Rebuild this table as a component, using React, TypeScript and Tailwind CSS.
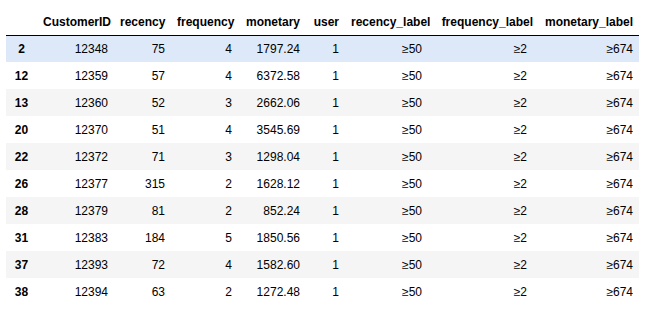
import React from 'react';

const columns = [
  'CustomerID',
  'recency',
  'frequency',
  'monetary',
  'user',
  'recency_label',
  'frequency_label',
  'monetary_label',
];

const rows: [string, string, string, string, string, string][] = [
  ['2', '12348', '75', '4', '1797.24', '1'],
  ['12', '12359', '57', '4', '6372.58', '1'],
  ['13', '12360', '52', '3', '2662.06', '1'],
  ['20', '12370', '51', '4', '3545.69', '1'],
  ['22', '12372', '71', '3', '1298.04', '1'],
  ['26', '12377', '315', '2', '1628.12', '1'],
  ['28', '12379', '81', '2', '852.24', '1'],
  ['31', '12383', '184', '5', '1850.56', '1'],
  ['37', '12393', '72', '4', '1582.60', '1'],
  ['38', '12394', '63', '2', '1272.48', '1'],
];

const App: React.FC = () => {
  return (
    <div className="w-[659px] h-[314px] bg-white overflow-hidden pl-[6px] pt-[8px] font-['Liberation_Sans',Arial,sans-serif] text-[12px] text-black">
      <table className="table-fixed border-collapse w-[633px]">
        <colgroup>
          <col className="w-[31px]" />
          <col className="w-[77px]" />
          <col className="w-[57px]" />
          <col className="w-[67px]" />
          <col className="w-[68px]" />
          <col className="w-[39px]" />
          <col className="w-[83px]" />
          <col className="w-[111px]" />
          <col className="w-[100px]" />
        </colgroup>
        <thead>
          <tr className="h-[27px] border-b border-black">
            <th className="p-0" />
            {columns.map((c) => (
              <th key={c} className="px-[6px] pt-[1px] pb-0 text-right font-bold whitespace-nowrap leading-none">
                {c}
              </th>
            ))}
          </tr>
        </thead>
        <tbody>
          {rows.map((r, i) => (
            <tr
              key={r[0]}
              className={
                'h-[27px] ' +
                (i === 0 ? 'bg-[#dde9f8]' : i % 2 === 0 ? 'bg-[#f5f5f5]' : 'bg-white')
              }
            >
              <th className="p-0 text-center font-bold leading-none">{r[0]}</th>
              <td className="px-[6px] py-0 text-right leading-none">{r[1]}</td>
              <td className="px-[6px] py-0 text-right leading-none">{r[2]}</td>
              <td className="px-[6px] py-0 text-right leading-none">{r[3]}</td>
              <td className="px-[6px] py-0 text-right leading-none">{r[4]}</td>
              <td className="px-[6px] py-0 text-right leading-none">{r[5]}</td>
              <td className="px-[6px] py-0 text-right leading-none">≥50</td>
              <td className="pl-[6px] pr-[12px] py-0 text-right leading-none">≥2</td>
              <td className="px-[6px] py-0 text-right leading-none">≥674</td>
            </tr>
          ))}
        </tbody>
      </table>
    </div>
  );
};

export default App;
